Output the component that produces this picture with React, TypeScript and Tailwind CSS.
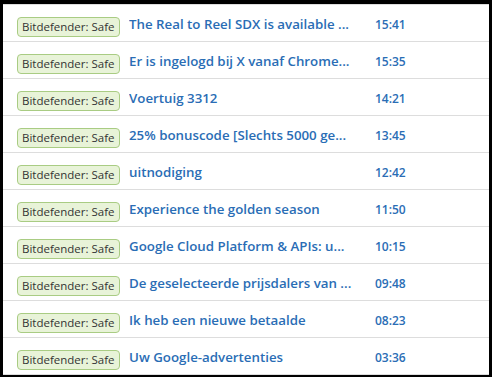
import React from 'react'

interface MailRow {
  subject: string
  time: string
}

const rows: MailRow[] = [
  { subject: 'The Real to Reel SDX is available ...', time: '15:41' },
  { subject: 'Er is ingelogd bij X vanaf Chrome...', time: '15:35' },
  { subject: 'Voertuig 3312', time: '14:21' },
  { subject: '25% bonuscode [Slechts 5000 ge...', time: '13:45' },
  { subject: 'uitnodiging', time: '12:42' },
  { subject: 'Experience the golden season', time: '11:50' },
  { subject: 'Google Cloud Platform & APIs: u...', time: '10:15' },
  { subject: 'De geselecteerde prijsdalers van ...', time: '09:48' },
  { subject: 'Ik heb een nieuwe betaalde', time: '08:23' },
  { subject: 'Uw Google-advertenties', time: '03:36' },
]

const SafeBadge: React.FC = () => (
  <span className="inline-flex items-center h-[20px] px-[4px] rounded-[4px] border border-[#a9cc83] bg-[#e8f3d8] text-[11.5px] leading-none text-[#333333] whitespace-nowrap">
    Bitdefender: Safe
  </span>
)

export default function App() {
  return (
    <div
      className="w-[492px] h-[377px] bg-black pt-[4px] pl-[3px] pr-[3px] pb-[2px] overflow-hidden"
      style={{ fontFamily: '"Open Sans", "Noto Sans", sans-serif' }}
    >
      <div className="h-full bg-white border-t border-[#dddddd] flex flex-col">
        {rows.map((row, i) => (
          <div
            key={i}
            className="h-[37px] shrink-0 flex items-center pt-[4px] border-b border-[#dddddd]"
          >
            <div className="w-[126px] pl-[14px] shrink-0">
              <SafeBadge />
            </div>
            <div className="w-[246px] shrink-0 truncate text-[13.3px] font-semibold text-[#2a6db5]">
              {row.subject}
            </div>
            <div className="text-[12px] font-semibold text-[#2a6db5]">{row.time}</div>
          </div>
        ))}
      </div>
    </div>
  )
}
